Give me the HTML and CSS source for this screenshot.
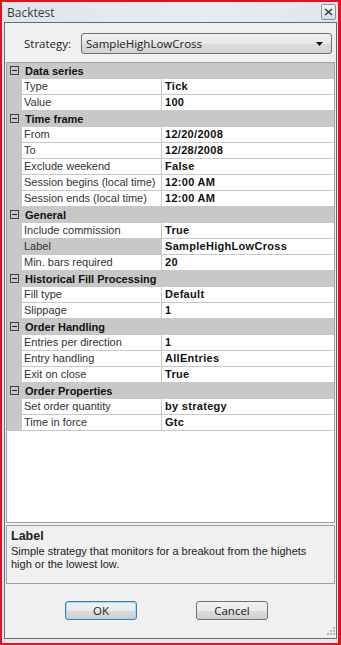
FILE: index.html
```html
<!DOCTYPE html>
<html lang="en">
<head>
    <meta charset="UTF-8">
    <title>Backtest</title>
    <link rel="stylesheet" href="styles.css">
</head>
<body>
    <div class="window">
        <div class="titlebar">
            <span class="title">Backtest</span>
            <span class="close">
                <svg width="9" height="8" viewBox="0 0 9 8"><path d="M1 1 L8 7 M8 1 L1 7" stroke="#3b3b3b" stroke-width="1.6"/></svg>
            </span>
        </div>
        <div class="client">
            <div class="strategy">
                <span class="strategy-label">Strategy:</span>
                <div class="combo">
                    <span>SampleHighLowCross</span>
                    <svg width="7" height="4" viewBox="0 0 7 4"><path d="M0 0 H7 L3.5 4 Z" fill="#111"/></svg>
                </div>
            </div>

            <div class="pgrid">
                <div class="cat"><span class="toggle"></span>Data series</div>
                <div class="prop"><span class="name">Type</span><span class="val">Tick</span></div>
                <div class="prop"><span class="name">Value</span><span class="val">100</span></div>

                <div class="cat"><span class="toggle"></span>Time frame</div>
                <div class="prop"><span class="name">From</span><span class="val">12/20/2008</span></div>
                <div class="prop"><span class="name">To</span><span class="val">12/28/2008</span></div>
                <div class="prop"><span class="name">Exclude weekend</span><span class="val">False</span></div>
                <div class="prop"><span class="name">Session begins (local time)</span><span class="val">12:00 AM</span></div>
                <div class="prop"><span class="name">Session ends (local time)</span><span class="val">12:00 AM</span></div>

                <div class="cat"><span class="toggle"></span>General</div>
                <div class="prop"><span class="name">Include commission</span><span class="val">True</span></div>
                <div class="prop selected"><span class="name">Label</span><span class="val">SampleHighLowCross</span></div>
                <div class="prop"><span class="name">Min. bars required</span><span class="val">20</span></div>

                <div class="cat"><span class="toggle"></span>Historical Fill Processing</div>
                <div class="prop"><span class="name">Fill type</span><span class="val">Default</span></div>
                <div class="prop"><span class="name">Slippage</span><span class="val">1</span></div>

                <div class="cat"><span class="toggle"></span>Order Handling</div>
                <div class="prop"><span class="name">Entries per direction</span><span class="val">1</span></div>
                <div class="prop"><span class="name">Entry handling</span><span class="val">AllEntries</span></div>
                <div class="prop"><span class="name">Exit on close</span><span class="val">True</span></div>

                <div class="cat"><span class="toggle"></span>Order Properties</div>
                <div class="prop"><span class="name">Set order quantity</span><span class="val">by strategy</span></div>
                <div class="prop"><span class="name">Time in force</span><span class="val">Gtc</span></div>
            </div>

            <div class="desc">
                <div class="desc-title">Label</div>
                <div class="desc-text">Simple strategy that monitors for a breakout from the highets high or the lowest low.</div>
            </div>

            <div class="buttons">
                <button class="btn default">OK</button>
                <button class="btn">Cancel</button>
            </div>
            <span class="grip">
                <svg width="9" height="9" viewBox="0 0 9 9" fill="#b5b5b5"><rect x="7" y="1" width="2" height="2"/><rect x="4" y="4" width="2" height="2"/><rect x="7" y="4" width="2" height="2"/><rect x="1" y="7" width="2" height="2"/><rect x="4" y="7" width="2" height="2"/><rect x="7" y="7" width="2" height="2"/></svg>
            </span>
        </div>
    </div>
</body>
</html>
```

FILE: styles.css
```css
body {
    margin: 0;
    font-family: "Liberation Sans", Arial, sans-serif;
    font-size: 11px;
    color: #000;
}
.window {
    width: 341px;
    height: 645px;
    box-sizing: border-box;
    border: 2px solid #e3111b;
    border-right-width: 3px;
    background: #e4eaf0;
    display: flex;
    flex-direction: column;
    padding: 0 1px 4px 2px;
}
.titlebar {
    height: 20px;
    display: flex;
    align-items: center;
    justify-content: space-between;
    background: linear-gradient(to right, #dde5ed, #e6ecf2 60%, #dfe6ed);
    margin: 0 -1px 0 -2px;
    padding: 0 2px 0 5px;
}
.title {
    font-family: "Open Sans", sans-serif;
    font-size: 12px;
    color: #3a3a3a;
}
.close {
    width: 13px;
    height: 14px;
    border: 1px solid #8a929a;
    border-radius: 2px;
    background: linear-gradient(#f4f6f8, #d8dde2);
    display: flex;
    align-items: center;
    justify-content: center;
}
.client {
    flex: 1;
    position: relative;
    background: #f0f0f0;
    border: 1px solid #5f6b76;
    padding: 0 1px;
    display: flex;
    flex-direction: column;
}
.strategy {
    display: flex;
    align-items: center;
    margin: 10px 0 0 0;
    height: 21px;
}
.strategy-label {
    font-family: "Open Sans", sans-serif;
    font-size: 11.5px;
    width: 57px;
    padding-left: 18px;
    color: #222;
}
.combo {
    width: 237px;
    height: 19px;
    border: 1px solid #707070;
    border-radius: 3px;
    background: linear-gradient(#f3f3f3, #e6e6e6 50%, #dcdcdc 51%, #d3d3d3);
    display: flex;
    align-items: center;
    justify-content: space-between;
    padding: 0 8px 0 4px;
    box-sizing: content-box;
    font-family: "Open Sans", sans-serif;
    font-size: 11.5px;
    color: #222;
}
.pgrid {
    margin-top: 8px;
    height: 459px;
    border: 1px solid #a0a0a0;
    background: #fff;
}
.cat {
    height: 15px;
    border-bottom: 1px solid #c8c8c8;
    background: #c8c8c8;
    display: flex;
    align-items: center;
    font-weight: bold;
    color: #111;
}
.toggle {
    width: 7px;
    height: 7px;
    border: 1px solid #404040;
    margin: 0 6px 0 3px;
    position: relative;
}
.toggle::after {
    content: "";
    position: absolute;
    left: 1px;
    top: 3px;
    width: 5px;
    height: 1px;
    background: #202020;
}
.prop {
    height: 15px;
    border-left: 15px solid #c8c8c8;
    border-bottom: 1px solid #c8c8c8;
    display: grid;
    grid-template-columns: 140px 1fr;
    line-height: 15px;
}
.name {
    padding-left: 2px;
    border-right: 1px solid #c8c8c8;
    color: #333;
    white-space: nowrap;
    overflow: hidden;
}
.selected .name {
    background: #c8c8c8;
}
.val {
    padding-left: 3px;
    font-weight: bold;
    letter-spacing: 0.3px;
    color: #111;
}
.desc {
    margin-top: 2px;
    height: 54px;
    border: 1px solid #a0a0a0;
    padding: 3px 5px 0 4px;
    color: #222;
}
.desc-title {
    font-weight: bold;
    font-size: 12.5px;
    line-height: 14px;
}
.desc-text {
    line-height: 13px;
    padding-top: 2px;
}
.buttons {
    display: flex;
    gap: 59px;
    justify-content: center;
    margin: 17px 0 0 -8px;
}
.btn {
    width: 72px;
    height: 19px;
    border: 1px solid #707070;
    border-radius: 3px;
    background: linear-gradient(#f2f2f2, #ebebeb 50%, #dddddd 51%, #cfcfcf);
    font-family: "Open Sans", sans-serif;
    font-size: 11.5px;
    color: #222;
    padding: 0;
}
.btn.default {
    border-color: #3c7fb1;
    box-shadow: inset 0 0 0 1px #a8d8f0;
}
.grip {
    position: absolute;
    right: 1px;
    bottom: 3px;
    line-height: 0;
}
```
